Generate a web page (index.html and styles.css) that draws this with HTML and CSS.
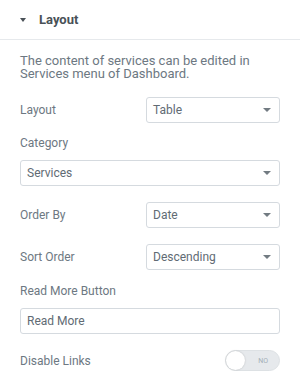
FILE: index.html
```html
<!DOCTYPE html>
<html lang="en">
<head>
    <meta charset="UTF-8">
    <meta name="viewport" content="width=device-width, initial-scale=1.0">
    <title>Layout</title>
    <link rel="stylesheet" href="styles.css">
</head>
<body>
    <div class="section-head">
        <span class="caret"></span>
        <span class="section-title">Layout</span>
    </div>
    <div class="panel">
        <div class="desc">The content of services can be edited in Services menu of Dashboard.</div>

        <div class="row row-first">
            <label class="label">Layout</label>
            <div class="select half"><span>Table</span><span class="arrow"></span></div>
        </div>

        <div class="block">
            <label class="label">Category</label>
            <div class="select full"><span>Services</span><span class="arrow"></span></div>
        </div>

        <div class="row">
            <label class="label">Order By</label>
            <div class="select half"><span>Date</span><span class="arrow"></span></div>
        </div>

        <div class="row">
            <label class="label">Sort Order</label>
            <div class="select half"><span>Descending</span><span class="arrow"></span></div>
        </div>

        <div class="block block-text">
            <label class="label">Read More Button</label>
            <div class="input">Read More</div>
        </div>

        <div class="row row-switch">
            <label class="label">Disable Links</label>
            <div class="switch">
                <span class="knob"></span>
                <span class="switch-text">NO</span>
            </div>
        </div>
    </div>
</body>
</html>
```

FILE: styles.css
```css
body {
    margin: 0;
    background-color: #ffffff;
    font-family: Roboto, "Liberation Sans", sans-serif;
    color: #6d7882;
}
.section-head {
    display: flex;
    align-items: center;
    height: 39px;
    padding-left: 20px;
    border-bottom: 1px solid #e6e9ec;
}
.caret {
    width: 0;
    height: 0;
    border-left: 3.5px solid transparent;
    border-right: 3.5px solid transparent;
    border-top: 4px solid #495157;
    margin-right: 13px;
}
.section-title {
    font-size: 13px;
    font-weight: 700;
    color: #495157;
}
.panel {
    padding: 14px 20px 0 20px;
}
.desc {
    font-size: 13px;
    line-height: 13px;
    color: #6d7882;
}
.label {
    font-size: 12px;
    line-height: 16px;
    color: #6d7882;
}
.row {
    display: flex;
    align-items: center;
    justify-content: space-between;
    margin-top: 16px;
}
.row-first {
    margin-top: 17px;
}
.block {
    margin-top: 12px;
    display: flex;
    flex-direction: column;
    gap: 9px;
}
.block-text {
    margin-top: 13px;
}
.select {
    box-sizing: border-box;
    height: 26px;
    border: 1px solid #d5dadf;
    border-radius: 3px;
    display: flex;
    align-items: center;
    justify-content: space-between;
    padding: 0 8px 0 6px;
    font-size: 12px;
    color: #616b74;
}
.half {
    width: 134px;
}
.full {
    width: 100%;
}
.arrow {
    width: 0;
    height: 0;
    border-left: 4px solid transparent;
    border-right: 4px solid transparent;
    border-top: 4px solid #727b82;
}
.input {
    box-sizing: border-box;
    height: 26px;
    border: 1px solid #d5dadf;
    border-radius: 3px;
    display: flex;
    align-items: center;
    padding-left: 6px;
    font-size: 12px;
    color: #616b74;
}
.row-switch {
    margin-top: 16px;
}
.switch {
    position: relative;
    box-sizing: border-box;
    width: 55px;
    height: 21px;
    border-radius: 11px;
    background-color: #e6e9ec;
    border: 1px solid #dde1e4;
    display: flex;
    align-items: center;
    justify-content: flex-end;
    padding-right: 11px;
}
.knob {
    position: absolute;
    left: 0;
    top: 0;
    width: 19px;
    height: 19px;
    border-radius: 50%;
    background-color: #ffffff;
    box-shadow: 0 0 2px rgba(0, 0, 0, 0.2);
}
.switch-text {
    font-size: 7px;
    color: #a4afb7;
}
```
